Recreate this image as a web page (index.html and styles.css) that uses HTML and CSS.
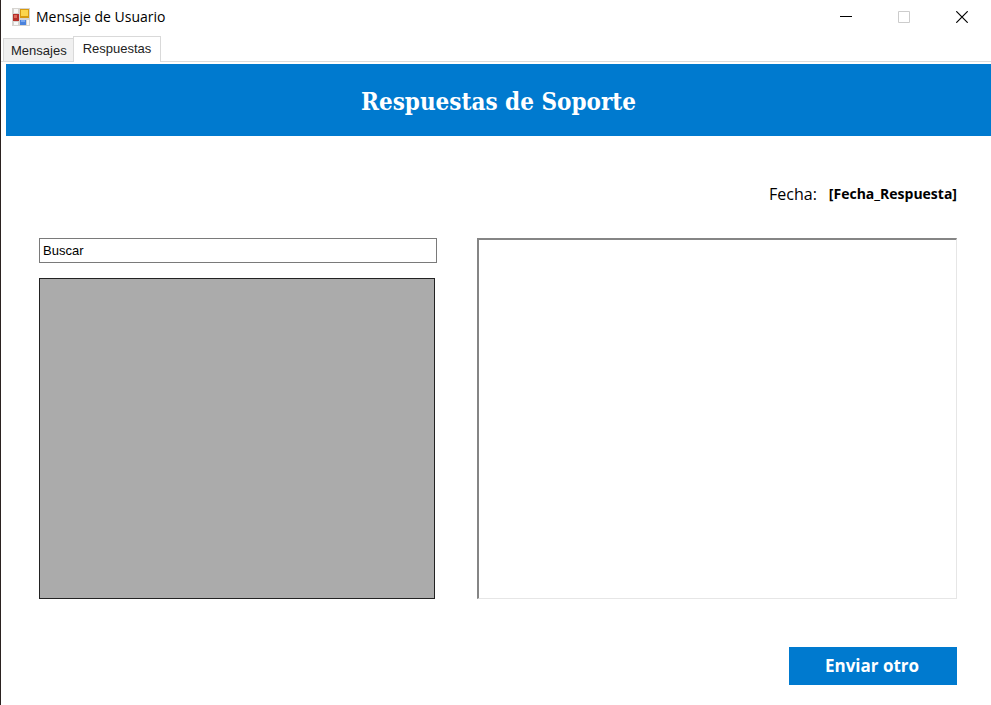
FILE: index.html
```html
<!DOCTYPE html>
<html lang="es">
<head>
<meta charset="utf-8">
<title>Mensaje de Usuario</title>
<link rel="stylesheet" href="styles.css">
</head>
<body>
<div class="window">
  <header class="titlebar">
    <svg class="app-icon" width="18" height="18" viewBox="0 0 18 18" aria-hidden="true">
      <rect width="18" height="18" fill="#d6d4d0"/>
      <rect x="2" y="1" width="4" height="4" fill="#f8f8f8"/>
      <rect x="1" y="6" width="6" height="7" fill="#b5302a"/>
      <rect x="2" y="7" width="3" height="3" fill="#dc6a5c"/>
      <rect x="2" y="14" width="4" height="3" fill="#f8f8f8"/>
      <rect x="8" y="1" width="9" height="9" fill="#d79a10"/>
      <rect x="9" y="2" width="7" height="6" fill="#fbd54c"/>
      <rect x="8" y="12" width="6" height="5" fill="#4a82dc"/>
      <rect x="9" y="12" width="4" height="2" fill="#7aa8f0"/>
      <rect x="15" y="12" width="2" height="5" fill="#f8f8f8"/>
    </svg>
    <h1 class="window-title">Mensaje de Usuario</h1>
    <div class="window-controls">
      <button class="control" type="button" aria-label="Minimizar">
        <svg width="12" height="12" viewBox="0 0 12 12"><path d="M0 5.5H12" stroke="#000"/></svg>
      </button>
      <button class="control" type="button" aria-label="Maximizar" disabled>
        <svg width="12" height="12" viewBox="0 0 12 12"><path d="M.5 .5H11.500V11.500H.5Z" fill="none" stroke="#ccc"/></svg>
      </button>
      <button class="control" type="button" aria-label="Cerrar">
        <svg width="12" height="12" viewBox="0 0 12 12"><path d="M.3 .3L11.700 11.700M11.700 .3L.3 11.700" stroke="#000" stroke-width="1.200"/></svg>
      </button>
    </div>
  </header>
  <div class="tabs" role="tablist">
    <button class="tab" type="button" role="tab" aria-selected="false">Mensajes</button>
    <button class="tab tab-active" type="button" role="tab" aria-selected="true">Respuestas</button>
  </div>
  <main class="page">
    <h2 class="banner">Respuestas de Soporte</h2>
    <div class="content">
      <p class="date"><span>Fecha:</span><strong class="date-value">[Fecha_Respuesta]</strong></p>
      <div class="columns">
        <div class="list">
          <input class="search" type="text" value="Buscar" aria-label="Buscar">
          <div class="grid-view"></div>
        </div>
        <textarea class="reply" aria-label="Respuesta"></textarea>
      </div>
      <button class="send" type="button">Enviar otro</button>
    </div>
  </main>
</div>
</body>
</html>
```
FILE: styles.css
```css
* {
  box-sizing: border-box;
}

body {
  margin: 0;
  background: #fff;
  color: #000;
  font-family: "Open Sans", "Noto Sans", sans-serif;
}

button,
input,
textarea {
  margin: 0;
  font: inherit;
  color: inherit;
  border-radius: 0;
}

.window {
  display: flex;
  flex-direction: column;
  min-height: 100vh;
  border-left: 1px solid #2b2220;
}

.titlebar {
  display: flex;
  align-items: center;
  height: 33px;
  padding-left: 11px;
}

.app-icon {
  flex: none;
  margin-right: 6px;
}

.window-title {
  margin: 0;
  flex: 1;
  font-size: 14px;
  line-height: 20px;
  font-weight: 400;
}

.window-controls {
  display: flex;
}

.control {
  display: flex;
  align-items: center;
  justify-content: center;
  width: 58px;
  height: 33px;
  padding: 0;
  border: 0;
  background: none;
}

.tabs {
  display: flex;
  align-items: flex-end;
  height: 29px;
  padding-left: 2px;
  border-bottom: 1px solid #dcdcdc;
  font-family: "Liberation Sans", sans-serif;
  font-size: 13px;
}

.tab {
  height: 23px;
  padding: 0 7px;
  border: 1px solid #d9d9d9;
  border-bottom: 0;
  background: #f0f0f0;
  color: #222;
}

.tab-active {
  height: 26px;
  padding: 0 9px 2px;
  margin-left: -2px;
  margin-bottom: -1px;
  background: #fff;
}

.page {
  flex: 1;
  padding: 2px 0 0 5px;
}

.banner {
  margin: 0;
  padding: 20px 0 16px;
  background: #007acf;
  color: #fff;
  font-family: "DejaVu Serif Condensed", "DejaVu Serif", serif;
  font-size: 24px;
  line-height: 36px;
  font-weight: 700;
  text-align: center;
}

.content {
  display: flex;
  flex-direction: column;
  padding: 46px 34px 20px 33px;
}

.date {
  display: flex;
  align-items: center;
  justify-content: flex-end;
  gap: 12px;
  margin: 0 0 32px;
  font-size: 16px;
  line-height: 24px;
}

.date-value {
  font-size: 14px;
}

.columns {
  display: grid;
  grid-template-columns: 398fr 480fr;
  gap: 40px;
  min-height: 361px;
}

.list {
  display: flex;
  flex-direction: column;
  gap: 15px;
}

.search {
  width: 100%;
  height: 25px;
  padding: 0 3px;
  border: 1px solid #7a7a7a;
  background: #fff;
  font-family: "Liberation Sans", sans-serif;
  font-size: 13px;
}

.grid-view {
  flex: 1;
  margin-right: 2px;
  border: 1px solid #222;
  background: #ababab;
}

.reply {
  width: 100%;
  height: 100%;
  border: 1px solid #e6e6e6;
  border-top: 2px solid #858585;
  border-left: 2px solid #858585;
  background: #fff;
  resize: none;
}

.send {
  align-self: flex-end;
  width: 168px;
  height: 38px;
  margin-top: 48px;
  padding: 0 2px 2px 0;
  border: 0;
  background: #007acf;
  color: #fff;
  font-size: 17px;
  font-weight: 700;
}
```
